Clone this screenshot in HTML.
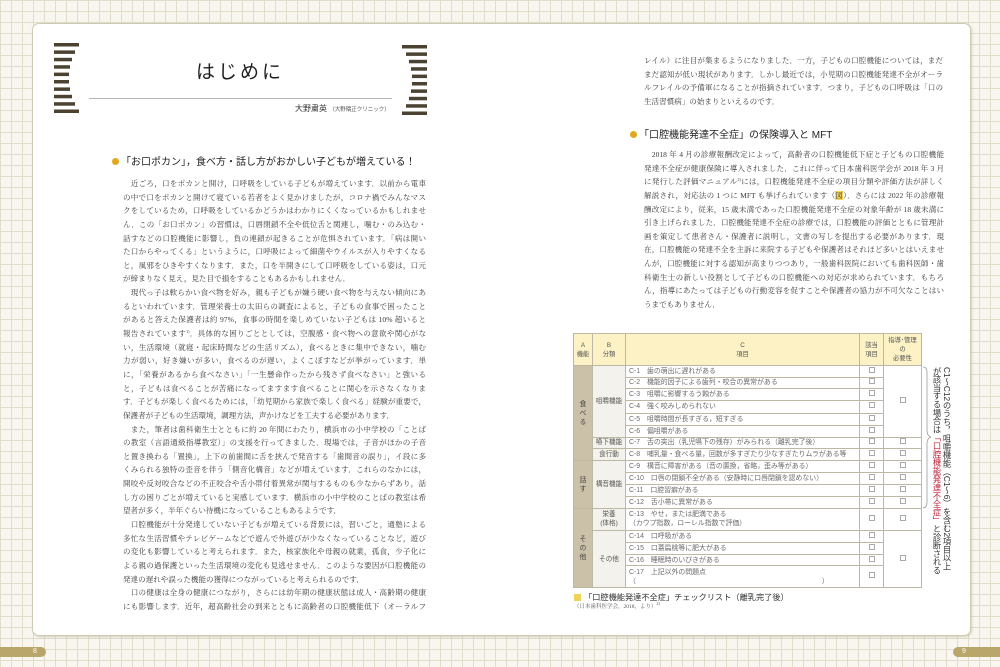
<!DOCTYPE html>
<html><head><meta charset="utf-8">
<style>
*{margin:0;padding:0;box-sizing:border-box}
html,body{width:1000px;height:667px;overflow:hidden}
body{position:relative;background-color:#f8f6ee;
background-image:linear-gradient(#e1ddcd 1px,transparent 1px),linear-gradient(90deg,#e1ddcd 1px,transparent 1px);
background-size:11px 11px;font-family:"Liberation Serif","Noto Serif CJK SC",serif;color:#3a3a3a}
.page{position:absolute;left:32px;top:23px;width:939px;height:613px;background:#fff;border:1px solid #cfcab4;border-radius:7px;box-shadow:1px 1px 2px rgba(150,140,110,.35)}
.tab{position:absolute;top:647px;height:10px;background:#b9a66b;color:#fff;font:7px "Liberation Sans",sans-serif;line-height:10px}
.abs{position:absolute}
.col{position:absolute;font-size:7.55px;line-height:13.65px}
.col div{height:13.65px;overflow:hidden;text-align:justify;text-align-last:justify}
.col div.l{text-align-last:left}
sup{font-size:4px;line-height:0;vertical-align:3px}
.sans{font-family:"Liberation Sans","Noto Sans CJK JP",sans-serif}
.h{position:absolute;font-family:"Liberation Sans","Noto Sans CJK JP",sans-serif;font-size:10px;color:#222;white-space:nowrap;line-height:12px}
.dot{display:inline-block;width:7px;height:7px;border-radius:50%;background:#e0a81c;margin-right:2px;vertical-align:0px}
table{position:absolute;left:573px;top:333px;width:348px;border-collapse:collapse;table-layout:fixed;font-family:"Liberation Sans","Noto Sans CJK JP",sans-serif;font-size:6.9px;color:#6a6a6a}
td{border:1px solid #bdb8a4;padding:0 0 0 3px;white-space:nowrap;overflow:hidden;line-height:9px}
th{border:1px solid #bdb8a4;background:#fcf2c6;font-weight:normal;font-size:6.3px;color:#555;line-height:9px}
td.a{background:#cbc1a8;color:#444;text-align:center;padding:0;line-height:9px;white-space:normal}
td.b{background:#f4f2ec;color:#555;text-align:center;padding:0;font-size:6.6px}
td.c{text-align:center;padding:0}
.cb{display:inline-block;width:6px;height:6px;border:1px solid #aaa}
.vt{position:absolute;writing-mode:vertical-rl;font-family:"Liberation Sans","Noto Sans CJK JP",sans-serif;font-size:8.3px;color:#333;line-height:10px;white-space:nowrap}
</style></head><body>
<div class="page"></div>
<div class="tab" style="left:0;width:46px;border-radius:0 5px 5px 0"><span style="position:absolute;left:33px">8</span></div>
<div class="tab" style="left:953px;width:47px;border-radius:5px 0 0 5px"><span style="position:absolute;left:9px">9</span></div>

<svg class="abs" style="left:54px;top:43px" width="26" height="70">
<g fill="#4b4232">
<rect x="0" y="0" width="25" height="3.5"/><rect x="0" y="7.4" width="21" height="3.5"/><rect x="0" y="14.8" width="18" height="3.5"/><rect x="0" y="22.2" width="16" height="3.5"/><rect x="0" y="29.6" width="15" height="3.5"/><rect x="0" y="37" width="15" height="3.5"/><rect x="0" y="44.4" width="16" height="3.5"/><rect x="0" y="51.8" width="18" height="3.5"/><rect x="0" y="59.2" width="21" height="3.5"/><rect x="0" y="66.5" width="25" height="3.5"/></g></svg>
<svg class="abs" style="left:401px;top:45px" width="26" height="70">
<g fill="#4b4232">
<rect x="1" y="0" width="25" height="3.5"/><rect x="5" y="7.4" width="21" height="3.5"/><rect x="8" y="14.8" width="18" height="3.5"/><rect x="10" y="22.2" width="16" height="3.5"/><rect x="11" y="29.6" width="15" height="3.5"/><rect x="11" y="37" width="15" height="3.5"/><rect x="10" y="44.4" width="16" height="3.5"/><rect x="8" y="51.8" width="18" height="3.5"/><rect x="5" y="59.2" width="21" height="3.5"/><rect x="1" y="66.5" width="25" height="3.5"/></g></svg>
<div class="abs sans" style="left:190px;top:61px;width:100px;text-align:center;font-size:19px;letter-spacing:3px;color:#1e1e1e;line-height:24px">はじめに</div>
<div class="abs" style="left:89px;top:98px;width:303px;height:1px;background:#b5b5b5"></div>
<div class="abs sans" style="left:295px;top:104px;font-size:8px;color:#333;white-space:nowrap;line-height:10px">大野粛英 <span style="font-size:5.5px;color:#555">（大野矯正クリニック）</span></div>

<div class="h" style="left:112px;top:157px"><span class="dot"></span>「お口ポカン」，食べ方・話し方がおかしい子どもが増えている！</div>

<div class="col" style="left:123px;top:177px;width:303px">
<div>　近ごろ，口をポカンと開け，口呼吸をしている子どもが増えています．以前から電車</div>
<div>の中で口をポカンと開けて寝ている若者をよく見かけましたが，コロナ禍でみんなマス</div>
<div>クをしているため，口呼吸をしているかどうかはわかりにくくなっているかもしれませ</div>
<div>ん．この「お口ポカン」の習慣は，口唇閉鎖不全や低位舌と関連し，噛む・のみ込む・</div>
<div>話すなどの口腔機能に影響し，負の連鎖が起きることが危惧されています．「病は開い</div>
<div>た口からやってくる」というように，口呼吸によって細菌やウイルスが入りやすくなる</div>
<div>と，風邪をひきやすくなります．また，口を半開きにして口呼吸をしている姿は，口元</div>
<div class="l">が締まりなく見え，見た目で損をすることもあるかもしれません．</div>
<div>　現代っ子は軟らかい食べ物を好み，親も子どもが嫌う硬い食べ物を与えない傾向にあ</div>
<div>るといわれています．管理栄養士の太田らの調査によると，子どもの食事で困ったこと</div>
<div>があると答えた保護者は約 97%，食事の時間を楽しめていない子どもは 10% 超いると</div>
<div>報告されています<sup>1)</sup>．具体的な困りごととしては，空腹感・食べ物への意欲や関心がな</div>
<div>い，生活環境（就寝・起床時間などの生活リズム），食べるときに集中できない，噛む</div>
<div>力が弱い，好き嫌いが多い，食べるのが遅い，よくこぼすなどが挙がっています．単</div>
<div>に，「栄養があるから食べなさい」「一生懸命作ったから残さず食べなさい」と強いる</div>
<div>と，子どもは食べることが苦痛になってますます食べることに関心を示さなくなりま</div>
<div>す．子どもが楽しく食べるためには，「幼児期から家族で楽しく食べる」経験が重要で，</div>
<div class="l">保護者が子どもの生活環境，調理方法，声かけなどを工夫する必要があります．</div>
<div>　また，筆者は歯科衛生士とともに約 20 年間にわたり，横浜市の小中学校の「ことば</div>
<div>の教室（言語通級指導教室）」の支援を行ってきました．現場では，子音がほかの子音</div>
<div>と置き換わる「置換」，上下の前歯間に舌を挟んで発音する「歯間音の誤り」，イ段に多</div>
<div>くみられる独特の歪音を伴う「側音化構音」などが増えています．これらのなかには，</div>
<div>開咬や反対咬合などの不正咬合や舌小帯付着異常が関与するものも少なからずあり，話</div>
<div>し方の困りごとが増えていると実感しています．横浜市の小中学校のことばの教室は希</div>
<div class="l">望者が多く，半年ぐらい待機になっていることもあるようです．</div>
<div>　口腔機能が十分発達していない子どもが増えている背景には，習いごと，通塾による</div>
<div>多忙な生活習慣やテレビゲームなどで遊んで外遊びが少なくなっていることなど，遊び</div>
<div>の変化も影響していると考えられます．また，核家族化や母親の就業，孤食，少子化に</div>
<div>よる親の過保護といった生活環境の変化も見逃せません．このような要因が口腔機能の</div>
<div class="l">発達の遅れや誤った機能の獲得につながっていると考えられるのです．</div>
<div>　口の健康は全身の健康につながり，さらには幼年期の健康状態は成人・高齢期の健康</div>
<div>にも影響します．近年，超高齢社会の到来とともに高齢者の口腔機能低下（オーラルフ</div>
</div>

<div class="col" style="left:644px;top:54px;width:299px">
<div>レイル）に注目が集まるようになりました．一方，子どもの口腔機能については，まだ</div>
<div>まだ認知が低い現状があります．しかし最近では，小児期の口腔機能発達不全がオーラ</div>
<div>ルフレイルの予備軍になることが指摘されています．つまり，子どもの口呼吸は「口の</div>
<div class="l">生活習慣病」の始まりといえるのです．</div>
</div>

<div class="h" style="left:630px;top:130px"><span class="dot"></span>「口腔機能発達不全症」の保険導入と MFT</div>

<div class="col" style="left:644px;top:148px;width:300px">
<div>　2018 年 4 月の診療報酬改定によって，高齢者の口腔機能低下症と子どもの口腔機能</div>
<div>発達不全症が健康保険に導入されました．これに伴って日本歯科医学会が 2018 年 3 月</div>
<div>に発行した評価マニュアル<sup>2)</sup>には，口腔機能発達不全症の項目分類や評価方法が詳しく</div>
<div>解説され，対応法の 1 つに MFT も挙げられています（<span style="background:#f6d65a">図</span>）．さらには 2022 年の診療報</div>
<div>酬改定により，従来，15 歳未満であった口腔機能発達不全症の対象年齢が 18 歳未満に</div>
<div>引き上げられました．口腔機能発達不全症の診療では，口腔機能の評価とともに管理計</div>
<div>画を策定して患者さん・保護者に説明し，文書の写しを提出する必要があります．現</div>
<div>在，口腔機能の発達不全を主訴に来院する子どもや保護者はそれほど多いとはいえませ</div>
<div>んが，口腔機能に対する認知が高まりつつあり，一般歯科医院においても歯科医師・歯</div>
<div>科衛生士の新しい役割として子どもの口腔機能への対応が求められています．もちろ</div>
<div>ん，指導にあたっては子どもの行動変容を促すことや保護者の協力が不可欠なことはい</div>
<div class="l">うまでもありません．</div>
</div>

<table>
<colgroup><col style="width:19px"><col style="width:33px"><col style="width:234px"><col style="width:24px"><col style="width:38px"></colgroup>
<tr style="height:32px"><th>A<br>機能</th><th>B<br>分類</th><th>C<br>項目</th><th>該当<br>項目</th><th>指導･管理<br>の<br>必要性</th></tr>
<tr style="height:11.7px"><td class="a" rowspan="8">食<br>べ<br>る</td><td class="b" rowspan="6">咀嚼機能</td><td>C-1　歯の萌出に遅れがある</td><td class="c"><span class="cb"></span></td><td class="c" rowspan="6"><span class="cb"></span></td></tr>
<tr style="height:11.6px"><td>C-2　機能的因子による歯列・咬合の異常がある</td><td class="c"><span class="cb"></span></td></tr>
<tr style="height:12px"><td>C-3　咀嚼に影響するう蝕がある</td><td class="c"><span class="cb"></span></td></tr>
<tr style="height:12.4px"><td>C-4　強く咬みしめられない</td><td class="c"><span class="cb"></span></td></tr>
<tr style="height:12px"><td>C-5　咀嚼時間が長すぎる，短すぎる</td><td class="c"><span class="cb"></span></td></tr>
<tr style="height:12px"><td>C-6　偏咀嚼がある</td><td class="c"><span class="cb"></span></td></tr>
<tr style="height:11.6px"><td class="b">嚥下機能</td><td>C-7　舌の突出（乳児嚥下の残存）がみられる（離乳完了後）</td><td class="c"><span class="cb"></span></td><td class="c"><span class="cb"></span></td></tr>
<tr style="height:12px"><td class="b">食行動</td><td>C-8　哺乳量・食べる量，回数が多すぎたり少なすぎたりムラがある等</td><td class="c"><span class="cb"></span></td><td class="c"><span class="cb"></span></td></tr>
<tr style="height:11.7px"><td class="a" rowspan="4">話<br>す</td><td class="b" rowspan="4">構音機能</td><td>C-9　構音に障害がある（音の置換，省略，歪み等がある）</td><td class="c"><span class="cb"></span></td><td class="c"><span class="cb"></span></td></tr>
<tr style="height:12px"><td>C-10　口唇の閉鎖不全がある（安静時に口唇閉鎖を認めない）</td><td class="c"><span class="cb"></span></td><td class="c"><span class="cb"></span></td></tr>
<tr style="height:12px"><td>C-11　口腔習癖がある</td><td class="c"><span class="cb"></span></td><td class="c"><span class="cb"></span></td></tr>
<tr style="height:12px"><td>C-12　舌小帯に異常がある</td><td class="c"><span class="cb"></span></td><td class="c"><span class="cb"></span></td></tr>
<tr style="height:22px"><td class="a" rowspan="5">そ<br>の<br>他</td><td class="b">栄養<br>(体格)</td><td>C-13　やせ，または肥満である<br>（カウプ指数，ローレル指数で評価）</td><td class="c"><span class="cb"></span></td><td class="c"><span class="cb"></span></td></tr>
<tr style="height:12px"><td class="b" rowspan="4">その他</td><td>C-14　口呼吸がある</td><td class="c"><span class="cb"></span></td><td class="c" rowspan="4"><span class="cb"></span></td></tr>
<tr style="height:12px"><td>C-15　口蓋扁桃等に肥大がある</td><td class="c"><span class="cb"></span></td></tr>
<tr style="height:11.3px"><td>C-16　睡眠時のいびきがある</td><td class="c"><span class="cb"></span></td></tr>
<tr style="height:22px"><td>C-17　上記以外の問題点<br>（　　　　　　　　　　　　　　　　　　　　　　　　　　　）</td><td class="c"><span class="cb"></span></td></tr>
</table>

<svg class="abs" style="left:922px;top:366px" width="10" height="144"><path d="M1 1 Q5 1 5 6 L5 64 Q5 70 9 71 Q5 72 5 78 L5 136 Q5 142 1 142" fill="none" stroke="#999" stroke-width="0.8"/></svg>
<div class="vt" style="left:942px;top:367px">C1〜C12のうち，咀嚼機能（C1〜6）を含む2項目以上</div>
<div class="vt" style="left:932px;top:367px">が該当する場合は<span style="color:#c0243a">「口腔機能発達不全症」</span>と診断される</div>

<div class="abs sans" style="left:574px;top:593px;font-size:8.2px;color:#333;white-space:nowrap;line-height:10px"><span style="display:inline-block;width:7px;height:7px;background:#f2d35a;vertical-align:-1px;margin-right:3px"></span>「口腔機能発達不全症」チェックリスト（離乳完了後）</div>
<div class="abs" style="left:574px;top:604px;font-size:5.5px;color:#555;white-space:nowrap;line-height:7px">（日本歯科医学会，2018，より）<sup>2)</sup></div>
</body></html>
